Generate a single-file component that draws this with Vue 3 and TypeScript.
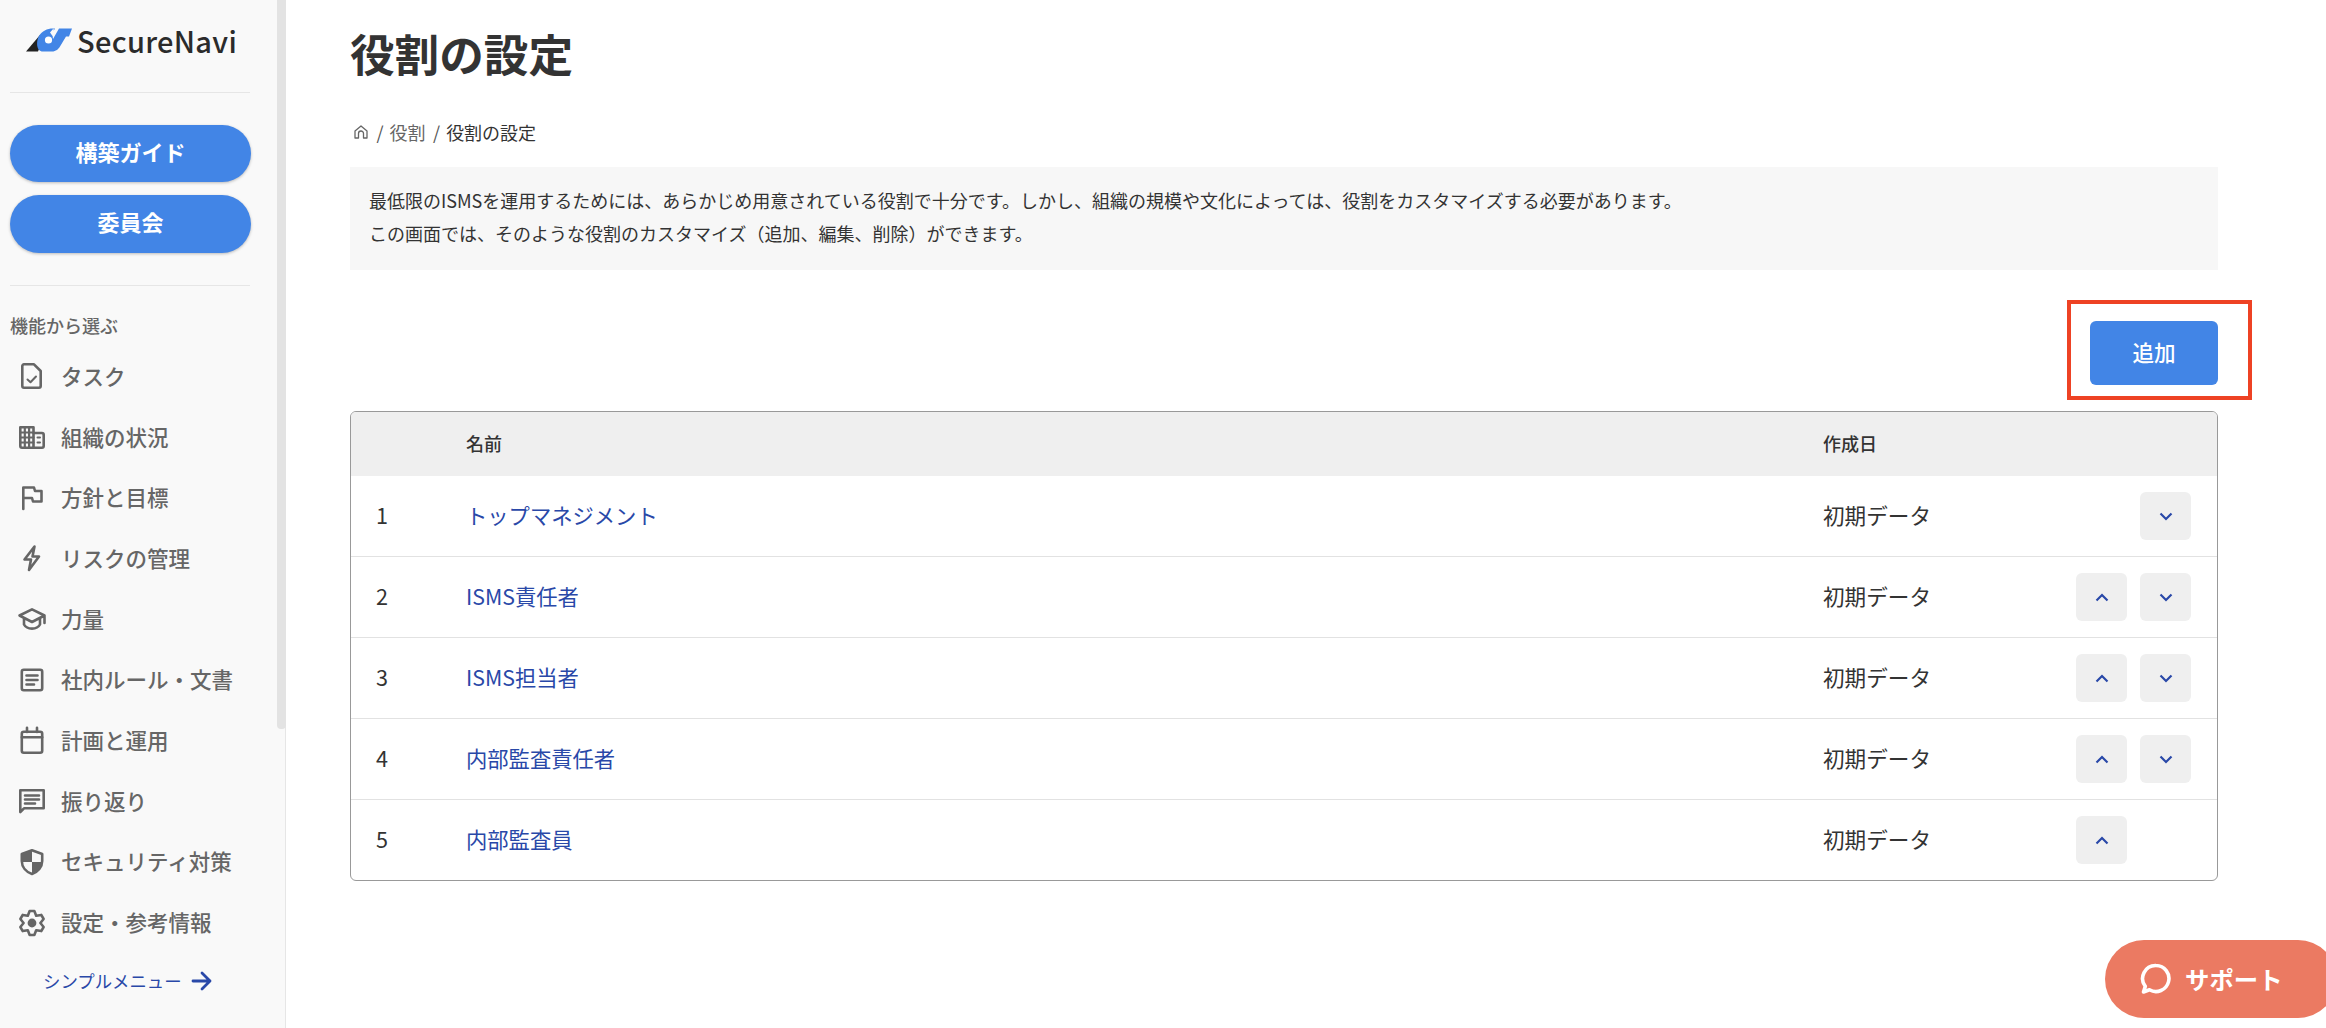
<script setup lang="ts">
interface NavItem { label: string; icon: string }
const nav: NavItem[] = [
  { label: 'タスク', icon: 'task' },
  { label: '組織の状況', icon: 'org' },
  { label: '方針と目標', icon: 'flag' },
  { label: 'リスクの管理', icon: 'bolt' },
  { label: '力量', icon: 'cap' },
  { label: '社内ルール・文書', icon: 'doc' },
  { label: '計画と運用', icon: 'cal' },
  { label: '振り返り', icon: 'chat' },
  { label: 'セキュリティ対策', icon: 'shield' },
  { label: '設定・参考情報', icon: 'gear' },
]
const roles = ['トップマネジメント', 'ISMS責任者', 'ISMS担当者', '内部監査責任者', '内部監査員']

function gearPath(): string {
  const pts: string[] = []
  const at = (deg: number, r: number) => {
    const a = (deg * Math.PI) / 180
    return `${(15 + r * Math.cos(a)).toFixed(2)} ${(15 + r * Math.sin(a)).toFixed(2)}`
  }
  for (let k = 0; k < 6; k++) {
    const a = k * 60 - 90
    pts.push(at(a - 11, 12.300), at(a + 11, 12.300), at(a + 30, 8.400))
  }
  return 'M' + pts.join('L') + 'Z'
}
const gear = gearPath()
</script>

<template>
  <div class="page">
    <aside class="side">
      <div class="thumb"></div>
      <div class="logo">
        <svg class="mark" viewBox="0 0 46 25" width="46" height="25">
          <path d="M0 23.500L14 7L17 11L12 23.500Z" fill="#222" />
          <path d="M27 .500C21 .500 16 3 13 8C10 13 10 23.500 17 23.500H26C30 23.500 32.500 21 34 18.500L40 8.500H43L46 .500H33L27 11C26 7 27 3 29 .500Z" fill="#4285e6" />
          <circle cx="22.500" cy="12" r="3.600" fill="#fff" />
          <path d="M24 4.500L27.500 .500L28.500 6L26.500 8Z" fill="#f9f9f9" />
        </svg>
        <span>SecureNavi</span>
      </div>
      <hr class="rule" />
      <button class="pill">構築ガイド</button>
      <button class="pill second">委員会</button>
      <hr class="rule rule2" />
      <div class="cap">機能から選ぶ</div>
      <nav class="nav">
        <a v-for="n in nav" :key="n.label" class="item">
          <svg class="ico" viewBox="0 0 30 30" width="30" height="30" fill="none" stroke="#666" stroke-width="2.600" stroke-linejoin="round" stroke-linecap="round">
            <template v-if="n.icon === 'task'">
              <path d="M7 3.300H17l6.700 6.700V25a1.700 1.700 0 0 1-1.700 1.700H7A1.700 1.700 0 0 1 5.300 25V5A1.700 1.700 0 0 1 7 3.300Z" />
              <path d="M10.500 18.500l3 2.800 5.500-5.800" stroke-width="2" />
            </template>
            <template v-else-if="n.icon === 'org'">
              <path d="M3.300 5.300H16.500V25.700H5A1.700 1.700 0 0 1 3.300 24Z" />
              <path d="M16.500 11H25A1.700 1.700 0 0 1 26.700 12.700V24A1.700 1.700 0 0 1 25 25.700H16.500" />
              <path d="M3.300 10.500H16.500M3.300 15.500H16.500M3.300 20.500H16.500M7.800 5.300V25.700M12.100 5.300V25.700" stroke-width="2.200" />
              <path d="M20.500 15.500h2.500M20.500 20.500h2.500" stroke-width="2" />
            </template>
            <template v-else-if="n.icon === 'flag'">
              <path d="M6.300 26V4.500H17L18 8H24.500V18.500H16L15 15H6.300" />
            </template>
            <template v-else-if="n.icon === 'bolt'">
              <path d="M17.500 3.500L7.500 16.500H14L12 27L22 13.500H15.500Z" />
            </template>
            <template v-else-if="n.icon === 'cap'">
              <path d="M15 5.300L2.500 11.500L15 18L27.500 11.500ZM7 14.500V20.500C10 26 20 26 23 20.500V14.500M27.500 11.500V19" />
            </template>
            <template v-else-if="n.icon === 'doc'">
              <rect x="4.800" y="4.800" width="20.400" height="20.400" rx="2" />
              <path d="M9.500 10.500H20.500M9.500 15H20.500M9.500 19.500H17" />
            </template>
            <template v-else-if="n.icon === 'cal'">
              <rect x="4.800" y="6.800" width="20.400" height="20.900" rx="2" />
              <path d="M4.800 12.300H25.200M10 2.800V7M20 2.800V7" />
            </template>
            <template v-else-if="n.icon === 'chat'">
              <path d="M3.300 4.300H26.700V22.300H7L3.300 26Z" />
              <path d="M8 9.500H22M8 13.500H22M8 17.500H18" />
            </template>
            <template v-else-if="n.icon === 'shield'">
              <path d="M15 3.300L25.200 7V14C25.200 20 21 25 15 27C9 25 4.800 20 4.800 14V7Z" />
              <path d="M15 3.300V15H4.800V7ZM15 15H25.200C25.200 20 21 25 15 27Z" fill="#666" stroke="none" />
            </template>
            <template v-else>
              <path :d="gear" />
              <circle cx="15" cy="15" r="4.400" fill="#666" stroke="none" />
            </template>
          </svg>
          <span>{{ n.label }}</span>
        </a>
      </nav>
      <a class="simple">シンプルメニュー
        <svg viewBox="0 0 22 20" width="22" height="20" fill="none" stroke="#2948a8" stroke-width="2.800" stroke-linecap="round" stroke-linejoin="round"><path d="M2 10h17M11 2l8 8-8 8" /></svg>
      </a>
    </aside>

    <main class="main">
      <h1 class="title">役割の設定</h1>
      <div class="crumbs">
        <svg viewBox="0 0 16 16" width="16" height="16" fill="none" stroke="#666" stroke-width="1.300" stroke-linejoin="round"><path d="M2 7l6-5 6 5v7h-3.500v-4.500a2.500 2.500 0 0 0-5 0V14H2z" /></svg>
        <span class="sep">/</span><span class="mid">役割</span><span class="sep">/</span><span class="cur">役割の設定</span>
      </div>
      <div class="info">
        <p>最低限のISMSを運用するためには、あらかじめ用意されている役割で十分です。しかし、組織の規模や文化によっては、役割をカスタマイズする必要があります。</p>
        <p>この画面では、そのような役割のカスタマイズ（追加、編集、削除）ができます。</p>
      </div>
      <div class="actions">
        <div class="mark-box"><button class="add">追加</button></div>
      </div>
      <div class="table">
        <div class="row head">
          <div class="c-num"></div>
          <div class="c-name">名前</div>
          <div class="c-date">作成日</div>
          <div class="c-ops"></div>
        </div>
        <div v-for="(r, i) in roles" :key="r" class="row body">
          <div class="c-num">{{ i + 1 }}</div>
          <div class="c-name"><a class="link">{{ r }}</a></div>
          <div class="c-date">初期データ</div>
          <div class="c-ops">
            <button class="mv" :class="{ hide: i === 0 }">
              <svg viewBox="0 0 14 9" width="14" height="9" fill="none" stroke="#2948a8" stroke-width="2.200"><path d="M1.500 7.500L7 2l5.500 5.500" /></svg>
            </button>
            <button class="mv" :class="{ hide: i === roles.length - 1 }">
              <svg viewBox="0 0 14 9" width="14" height="9" fill="none" stroke="#2948a8" stroke-width="2.200"><path d="M1.500 1.500L7 7l5.500-5.500" /></svg>
            </button>
          </div>
        </div>
      </div>
    </main>

    <button class="support">
      <svg viewBox="0 0 32 32" width="32" height="32" fill="none" stroke="#fff" stroke-width="3.600" stroke-linejoin="round"><path d="M16 2.500a13 13 0 1 1-6.500 24.300L3.500 29l1.800-5.600A13 13 0 0 1 16 2.500z" /></svg>
      <span>サポート</span>
    </button>
  </div>
</template>

<style>
html, body { margin: 0; background: #fff; }
</style>

<style scoped>
.page {
  display: flex;
  height: 1028px;
  overflow: hidden;
  position: relative;
  font-family: "Noto Sans CJK JP", "Noto Sans", sans-serif;
  color: #333;
}
.side {
  position: relative;
  box-sizing: border-box;
  width: 286px;
  flex: none;
  background: #f9f9f9;
  border-right: 1px solid #e6e6e6;
  padding: 0 35px 0 10px;
  height: 1028px;
}
.thumb {
  position: absolute;
  right: -1px;
  top: 0;
  width: 9px;
  height: 729px;
  background: #e3e3e3;
  border-radius: 0 0 4px 4px;
}
.logo {
  display: flex;
  align-items: center;
  height: 92px;
  padding: 0 0 12px 16px;
  box-sizing: border-box;
  gap: 5px;
}
.logo span {
  font-size: 29px;
  font-weight: 500;
  color: #2b2b2b;
  letter-spacing: .3px;
}
.mark { flex: none; }
.rule {
  margin: 0;
  border: 0;
  border-top: 1px solid #e6e6e6;
}
.pill {
  display: block;
  width: 241px;
  height: 57px;
  margin-top: 32px;
  border: 0;
  border-radius: 29px;
  padding: 0 0 6px;
  background: #4285e6;
  color: #fff;
  font: 700 22px "Noto Sans CJK JP", sans-serif;
  box-shadow: 0 1px 3px rgba(0, 0, 0, .25);
}
.second { margin-top: 13px; height: 58px; }
.rule2 { margin-top: 32px; }
.cap {
  margin-top: 26px;
  font-size: 18px;
  line-height: 26px;
  font-weight: 500;
  color: #666;
}
.nav {
  display: flex;
  flex-direction: column;
  margin-top: 8px;
}
.item {
  display: flex;
  align-items: center;
  height: 60.7px;
  gap: 14.500px;
  padding-left: 6.500px;
  font-size: 21.500px;
  font-weight: 500;
  color: #666;
  white-space: nowrap;
}
.item span { margin-top: -2px; }
.ico { flex: none; }
.simple {
  display: flex;
  align-items: center;
  justify-content: flex-start;
  gap: 9px;
  margin: 13px 0 0 33px;
  font-size: 17.400px;
  line-height: 30px;
  color: #2948a8;
  white-space: nowrap;
}
.main {
  box-sizing: border-box;
  width: 1932px;
  padding-left: 64px;
  flex: none;
}
.title {
  margin: 20px 0 0;
  font-size: 44.600px;
  line-height: 66px;
  font-weight: 700;
  color: #333;
}
.crumbs {
  display: flex;
  align-items: center;
  margin-top: 32px;
  height: 28px;
  font-size: 18px;
  padding-left: 3px;
  color: #333;
}
.sep { margin: 0 6px 0 7.500px; color: #555; }
.mid { color: #666; }
.info {
  margin-top: 21px;
  height: 103px;
  width: 1868px;
  box-sizing: border-box;
  padding: 17px 19px;
  background: #f7f7f7;
  font-size: 18px;
  line-height: 33px;
  color: #333;
}
.info p { margin: 0; }
.actions {
  width: 1868px;
  display: flex;
  justify-content: flex-end;
  margin-top: 30px;
  height: 100px;
}
.mark-box {
  box-sizing: border-box;
  width: 185px;
  height: 100px;
  margin-right: -34px;
  border: 4px solid #ee4224;
  padding: 17px 30px 0 19px;
}
.add {
  width: 128px;
  height: 64px;
  border: 0;
  border-radius: 6px;
  padding: 0 0 4px;
  background: #4285e6;
  color: #fff;
  font: 500 21.600px "Noto Sans CJK JP", sans-serif;
}
.table {
  box-sizing: border-box;
  margin-top: 11px;
  width: 1868px;
  border: 1px solid #999;
  border-radius: 6px;
  overflow: hidden;
}
.row { display: flex; align-items: center; }
.head {
  height: 64px;
  background: #efefef;
  font-size: 18px;
  font-weight: 500;
}
.head > div { padding-bottom: 2px; }
.body {
  height: 81px;
  border-top: 1px solid #e2e2e2;
  box-sizing: border-box;
  font-size: 21.600px;
}
.head + .body { border-top: 0; height: 80px; }
.c-num { width: 115px; padding-left: 25px; box-sizing: border-box; flex: none; }
.c-name { width: 1357px; flex: none; }
.c-date { width: 253px; flex: none; }
.c-num, .c-name, .c-date { padding-bottom: 3px; }
.c-ops {
  flex: 1;
  display: flex;
  gap: 13px;
}
.link { color: #2948a8; font-size: 21.300px; }
.mv {
  width: 51px;
  height: 48px;
  border: 0;
  border-radius: 6px;
  background: #efefef;
  padding: 0;
  display: flex;
  align-items: center;
  justify-content: center;
}
.hide { visibility: hidden; }
.support {
  position: absolute;
  left: 2105px;
  top: 940px;
  width: 232px;
  height: 78px;
  border: 0;
  border-radius: 39px;
  background: #eb7a62;
  color: #fff;
  display: flex;
  align-items: center;
  gap: 13px;
  padding: 0 0 0 35px;
  font: 700 24.400px "Noto Sans CJK JP", sans-serif;
}
.support span { margin-top: -2px; }
</style>
